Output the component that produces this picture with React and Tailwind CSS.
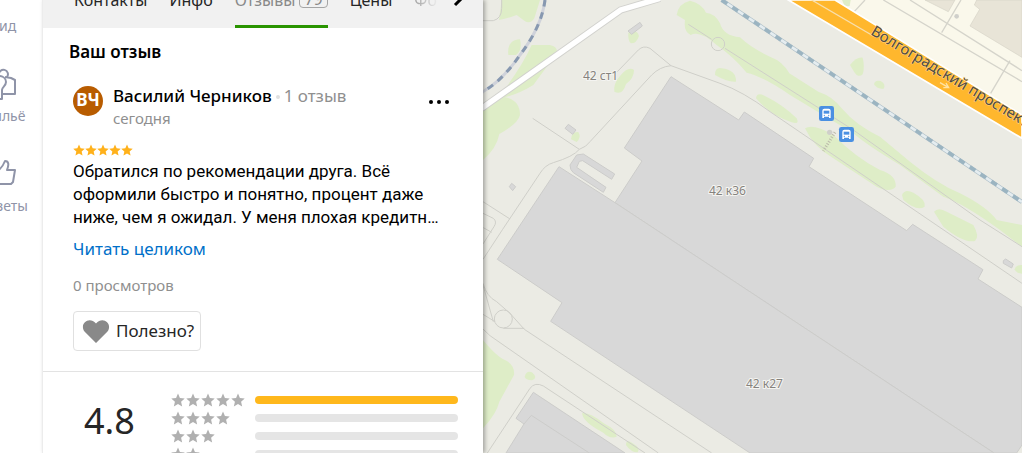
import React from 'react';

const STAR = 'M12 1l3.3 7.6 8.2.8-6.2 5.5 1.8 8.1L12 18.8 4.900 23l1.8-8.100L.5 9.400l8.200-.8z';

const ratings = [
  { stars: 5, percent: 100 },
  { stars: 4, percent: 0 },
  { stars: 3, percent: 0 },
  { stars: 2, percent: 0 },
];

const Star = ({ className }) => (
  <svg viewBox="0 0 24 24" className={className} fill="currentColor" aria-hidden="true">
    <path d={STAR} />
  </svg>
);

const Sidebar = () => (
  <aside className="flex w-[42px] shrink-0 justify-end overflow-hidden text-sm leading-5 text-[#8f94a8]">
    <ul className="w-[78px] shrink-0 text-center">
      <li className="flex h-9 flex-col items-center justify-end">
        <svg viewBox="0 0 28 4" className="mb-[15px] h-1 w-7 shrink-0" fill="none" stroke="currentColor" strokeWidth="2">
          <path d="M4 0H26" />
        </svg>
        <span>Вид</span>
      </li>
      <li className="flex h-[90px] flex-col items-center justify-end">
        <svg viewBox="0 0 32 36" className="mb-1 h-9 w-8" fill="none" stroke="currentColor" strokeWidth="2" strokeLinejoin="round">
          <path d="M4 16c0-8 15-8 15 0 0 4-4 5-4 8v9H9v-9c-3-2-5-4-5-8z" />
          <path d="M12 9a4.500 4.500 0 1 1 8 2M18 11l6 1 4 2v14H16" />
        </svg>
        <span>Жильё</span>
      </li>
      <li className="flex h-[90px] flex-col items-center justify-end">
        <svg viewBox="0 0 32 32" className="mb-2 h-8 w-8" fill="none" stroke="currentColor" strokeWidth="2" strokeLinejoin="round">
          <path d="M4 14h6v14H4zM10 15c4-2 6-5 8-10 4 0 4 4 2 9h8l-2 12-2 2H10" />
        </svg>
        <span>Советы</span>
      </li>
    </ul>
  </aside>
);

const Tabs = () => (
  <nav className="flex h-7 items-end gap-[22px] overflow-hidden bg-[#f1f1f1] pl-[31px] text-base leading-6 text-[#262626]">
    <a href="#contacts" className="h-10 shrink-0">Контакты</a>
    <a href="#info" className="h-10 shrink-0">Инфо</a>
    <a href="#reviews" className="flex h-10 shrink-0 gap-1 border-b-3 border-[#299400] text-[#898989]">
      <span>Отзывы</span>
      <span className="h-5 rounded border border-[#a5a5a5] px-1 leading-5">79</span>
    </a>
    <a href="#prices" className="h-10 shrink-0">Цены</a>
    <div className="flex shrink-0 gap-3">
      <a href="#photos" className="h-10 w-6 overflow-hidden bg-linear-to-r from-[#a0a0a0] to-[#eeeeee] bg-clip-text text-transparent">Фото</a>
      <button type="button" aria-label="Далее" className="h-10 w-5">
        <svg viewBox="0 0 20 40" className="h-10 w-5" fill="none" stroke="#000" strokeWidth="3">
          <path d="M5 4l6 7-6 6" />
        </svg>
      </button>
    </div>
  </nav>
);

const Review = () => (
  <section className="border-b border-[#e3e3e3] pb-5">
    <h2 className="pt-3 pl-[26px] text-[17px] leading-6 font-semibold">Ваш отзыв</h2>
    <article className="mt-5 pr-8 pl-[30px]">
      <header className="flex items-start">
        <div className="mt-0.5 flex size-[30px] shrink-0 items-center justify-center rounded-full bg-[#b85c00] pb-0.5 text-[17px] leading-6 font-bold text-white">
          ВЧ
        </div>
        <div className="ml-2.5 grow">
          <p className="text-[17px] leading-6 text-[#8f8f8f]">
            <span className="font-medium text-black">Василий Черников</span>
            <span className="mx-1 inline-block size-1 rounded-full bg-[#e0e0e0] align-middle" />
            1 отзыв
          </p>
          <p className="text-[15px] leading-5 text-[#8f8f8f]">сегодня</p>
        </div>
        <button type="button" aria-label="Ещё" className="mt-3 flex w-6 justify-center gap-1 py-1">
          <i className="size-1 rounded-full bg-black" />
          <i className="size-1 rounded-full bg-black" />
          <i className="size-1 rounded-full bg-black" />
        </button>
      </header>
      <div className="mt-4 flex text-[#ffb11b]">
        {[1, 2, 3, 4, 5].map((n) => <Star key={n} className="size-3" />)}
      </div>
      <p className="mt-1 text-[17px] leading-[23px] whitespace-nowrap font-[Roboto,sans-serif]">
        Обратился по рекомендации друга. Всё<br />
        оформили быстро и понятно, процент даже<br />
        ниже, чем я ожидал. У меня плохая кредитн…
      </p>
      <a href="#full" className="mt-2 block text-[17px] leading-6 text-[#0070c9]">Читать целиком</a>
      <p className="mt-3 text-[15px] leading-6 text-[#8f8f8f]">0 просмотров</p>
      <button type="button" className="mt-3.5 flex h-10 items-center gap-1 rounded border border-[#e0e0e0] px-1.5 text-[17px] leading-6 text-[#262626]">
        <svg viewBox="0 0 32 32" className="size-8" fill="#898989">
          <path d="M16 28L4.500 16.500C-1 9 9 .5 16 8.500 23 .5 33 9 27.500 16.500z" />
        </svg>
        Полезно?
      </button>
    </article>
  </section>
);

const Summary = () => (
  <section className="flex pt-[19px] pr-[25px] pl-[26px]">
    <div className="w-[102px] shrink-0 text-[#262626]">
      <p className="pt-1.5 pl-[15px] text-[36px] leading-[48px]">4.8</p>
      <p className="text-[15px] leading-6 text-[#8f8f8f]">79</p>
    </div>
    <ul className="grow">
      {ratings.map(({ stars, percent }) => (
        <li key={stars} className="flex h-[18px] items-center">
          <div className="flex w-[84px] shrink-0 gap-px text-[#b0b0b0]">
            {Array.from({ length: stars }).map((_, i) => <Star key={i} className="size-3.5" />)}
          </div>
          <div className="h-2 grow overflow-hidden rounded-full bg-[#e5e5e5]">
            <div className="h-full bg-[#ffb81c]" style={{ width: `${percent}%` }} />
          </div>
        </li>
      ))}
    </ul>
  </section>
);

const BusStop = ({ x, y }) => (
  <g transform={`translate(${x} ${y})`}>
    <rect width="45" height="45" rx="7" fill="#4a90e2" />
    <path d="M10 36V14q0-6 6-6h13q6 0 6 6v22h-5v-4H15v4z" fill="#fff" />
    <path d="M14 14h17v9H14z" fill="#4a90e2" />
    <circle cx="16" cy="28" r="2" fill="#4a90e2" />
    <circle cx="29" cy="28" r="2" fill="#4a90e2" />
  </g>
);

const CityMap = () => (
  <main className="min-w-0 grow overflow-hidden bg-[#ebebe4]">
    <svg viewBox="483 0 539 453" preserveAspectRatio="xMinYMin slice" className="h-full w-full">
      <g transform="translate(480 0) scale(0.33333)">
        {/* green areas */}
        <g fill="#deedc7">
          <path d="M65 0L57 60Q85 55 110 45L133 62Q150 75 163 55L180 0z" />
          <path d="M85 165Q80 120 120 118Q128 150 108 165z" />
          <path d="M155 135H210Q235 140 230 160L160 255Q120 280 75 292Q120 300 120 345Q115 370 58 402Q50 445 9 480V320L80 260Q130 190 155 135z" />
          <path d="M445 98Q470 85 477 108Q470 130 453 130Q443 122 445 98z" />
          <path d="M403 275Q400 250 420 228Q445 197 462 210Q462 235 438 252Q428 287 403 275z" />
          <path d="M273 418Q275 394 295 396Q305 412 290 426z" />
          <path d="M590 45Q595 10 630 2Q665 10 678 38Q705 40 720 70Q730 108 780 112Q815 145 870 170Q910 185 928 220L1015 275Q1060 290 1085 325Q1130 378 1200 410L1290 485Q1370 550 1440 580Q1520 620 1550 660L1626 675V740L1560 690Q1450 610 1390 590L1260 495Q1160 435 1120 400L930 285Q850 230 800 218Q760 170 710 135Q660 90 632 105Q610 95 615 60z" />
          <path d="M705 225Q705 200 725 205Q770 210 768 245Q745 248 705 225z" />
          <path d="M828 295Q830 275 855 288Q910 315 950 355Q960 375 935 367Q870 345 828 295z" />
          <path d="M975 385Q1000 370 1060 405Q1130 475 1200 510Q1250 525 1247 560Q1230 580 1190 560L1060 475Q1000 440 975 385z" />
          <path d="M1110 195Q1130 170 1148 173Q1155 200 1148 223Q1135 235 1122 215z" />
          <path d="M1182 253q2-14 20-10q18 10 8 24q-20 0-28-14z" />
          <path d="M1266 585Q1275 565 1300 578Q1340 600 1334 620Q1310 635 1270 600z" />
          <path d="M1362 635Q1375 620 1400 635L1480 675Q1500 710 1485 723Q1450 730 1390 680z" />
          <path d="M1545 675L1626 740V675z" />
          <path d="M1604 808q2-14 22-13v26q-20-2-22-13z" />
          <path d="M9 1020Q50 1070 75 1080Q105 1095 102 1125L58 1205Q50 1240 9 1285z" />
          <path d="M134 1130q5-20 22-13q20 18 0 24q-20-1-22-11z" />
          <path d="M306 1240q20-5 65 30q40 20 39 40q-20 8-40-12q-60-30-64-58z" />
          <path d="M438 1335q0-20 20-5q25 15 15 27q-20 0-35-22z" />
        </g>

        {/* block north of the avenue */}
        <path d="M1030 0H1626V350z" fill="#faf8eb" />
        <path d="M1086 0h26l-3 18-14 2z" fill="#deedc7" />
        <g fill="#e8e4d7" stroke="#d6d3c7" strokeWidth="2">
          <path d="M1335 0L1405 35 1425 0zM1490 0L1483 15 1499 28 1470 78 1626 172V0z" />
        </g>
        <circle cx="1430" cy="49" r="7" fill="#d0d0cb" />
        <g fill="none" stroke="#d5d4cb" strokeWidth="4">
          <path d="M1155 0L1120 38M1210 0L1626 245M1290 0L1626 212M1443 0L1385 98M1590 182L1532 280" />
        </g>
        <path d="M925 0L1626 415V345L1065 0z" fill="#ffb72d" stroke="#fff" strokeWidth="5" />
        <path d="M995 0L1180 108" stroke="#f8dfae" strokeWidth="4" />
        <path d="M1380 248l26 15m-8-14l8 14h-16" fill="none" stroke="#ffe3a5" strokeWidth="4" />

        {/* footpaths */}
        <g fill="none" stroke="#cfcfc9" strokeWidth="3">
          <path d="M9 62H40Q65 55 65 25V0M412 215L475 150Q490 135 510 145L573 197L720 250Q790 275 870 335L1626 850" />
          <path d="M573 197Q540 200 515 225L330 425Q320 440 298 448L158 355M298 448Q280 470 220 488Q195 495 180 520L68 688L9 778" />
          <path d="M625 73L695 118M735 145L1120 390L1500 660L1626 740" />
          <path d="M9 605L90 657M9 640L40 655Q52 665 42 680L9 732M10 683l25 14" />
          <circle cx="714" cy="132" r="20" />
          <path d="M9 850Q20 890 50 905L90 940L133 988L695 1359M9 855L40 965M9 943L45 965M133 985H70M9 987L30 1007L535 1359" />
          <circle cx="70" cy="957" r="27" />
          <path d="M22 1359L150 1165Q165 1145 190 1158L495 1359" />
        </g>

        {/* railways and the white street */}
        <g fill="none">
          <path d="M195 0Q185 80 120 165Q65 245 5 277" stroke="#cfd2da" strokeWidth="9" />
          <path d="M195 0Q185 80 120 165Q65 245 5 277" stroke="#8798b0" strokeWidth="9" strokeDasharray="20 18" />
          <path d="M725 0L1626 606" stroke="#aebfc8" strokeWidth="12" />
          <path d="M725 0L1626 606" stroke="#e5edf0" strokeWidth="8" />
          <path d="M725 0L1626 606" stroke="#9bb4c1" strokeWidth="11" strokeDasharray="20 19" />
          <path d="M5 325L422 30L540 -5" stroke="#d2d2ce" strokeWidth="22" />
          <path d="M5 325L422 30L540 -5" stroke="#fff" strokeWidth="16" />
        </g>

        {/* buildings */}
        <g fill="#d8d8d8" stroke="#ccccca" strokeWidth="3" strokeLinejoin="round">
          <path d="M573 230L776 360 793 336 1001 475 987 500 1280 692 1298 673 1509 809 1494 837 1626 922V1335L1610 1359H1542L405 608 486 483 433 444z" />
          <path d="M237 500L52 778 246 908 212 964 810 1359H1542L405 608z" />
          <path d="M160 1177L108 1255 132 1272 78 1359H435z" />
          <path d="M132 1272L154 1246 328 1359" fill="none" />
          <path d="M290 465L310 462 404 522 395 538 308 482 298 484 290 502 378 562 370 577 280 518Q270 510 270 495z" />
          <path d="M444 93L480 67 487 78 455 103zM255 385L265 373 288 390 278 403zM88 560L95 550 107 560 98 572zM1570 782L1577 777 1600 792 1595 804 1570 790z" />
        </g>

        <circle cx="1049" cy="397" r="8" fill="#cfcfca" />
        <path d="M1065 397L1030 453" stroke="#bbb9aa" strokeWidth="9" strokeDasharray="3 5" />
        <BusStop x="1017" y="318" />
        <BusStop x="1077" y="381" />
      </g>

      <g fontFamily="'Noto Sans', sans-serif" fontSize="12" fill="#85827d" stroke="#f4f4f1" strokeWidth="2" paintOrder="stroke">
        <text x="583" y="80">42 ст1</text>
        <text x="709" y="195">42 к36</text>
        <text x="746" y="388">42 к27</text>
      </g>
      <text transform="translate(870 34) rotate(31)" fontFamily="'Noto Sans', sans-serif" fontSize="15" fill="#514b40" stroke="#ffd78a" strokeWidth="1" paintOrder="stroke">
        Волгоградский проспект
      </text>
    </svg>
  </main>
);

const App = () => {
  return (
    <div className="flex h-screen overflow-hidden bg-white font-['Noto_Sans',sans-serif] text-black">
      <Sidebar />
      <div className="relative w-[441px] shrink-0 overflow-hidden border-l border-[#ececec] shadow-[2px_0_4px_rgba(0,0,0,0.3)]">
        <Tabs />
        <Review />
        <Summary />
      </div>
      <CityMap />
    </div>
  );
};

export default App;
